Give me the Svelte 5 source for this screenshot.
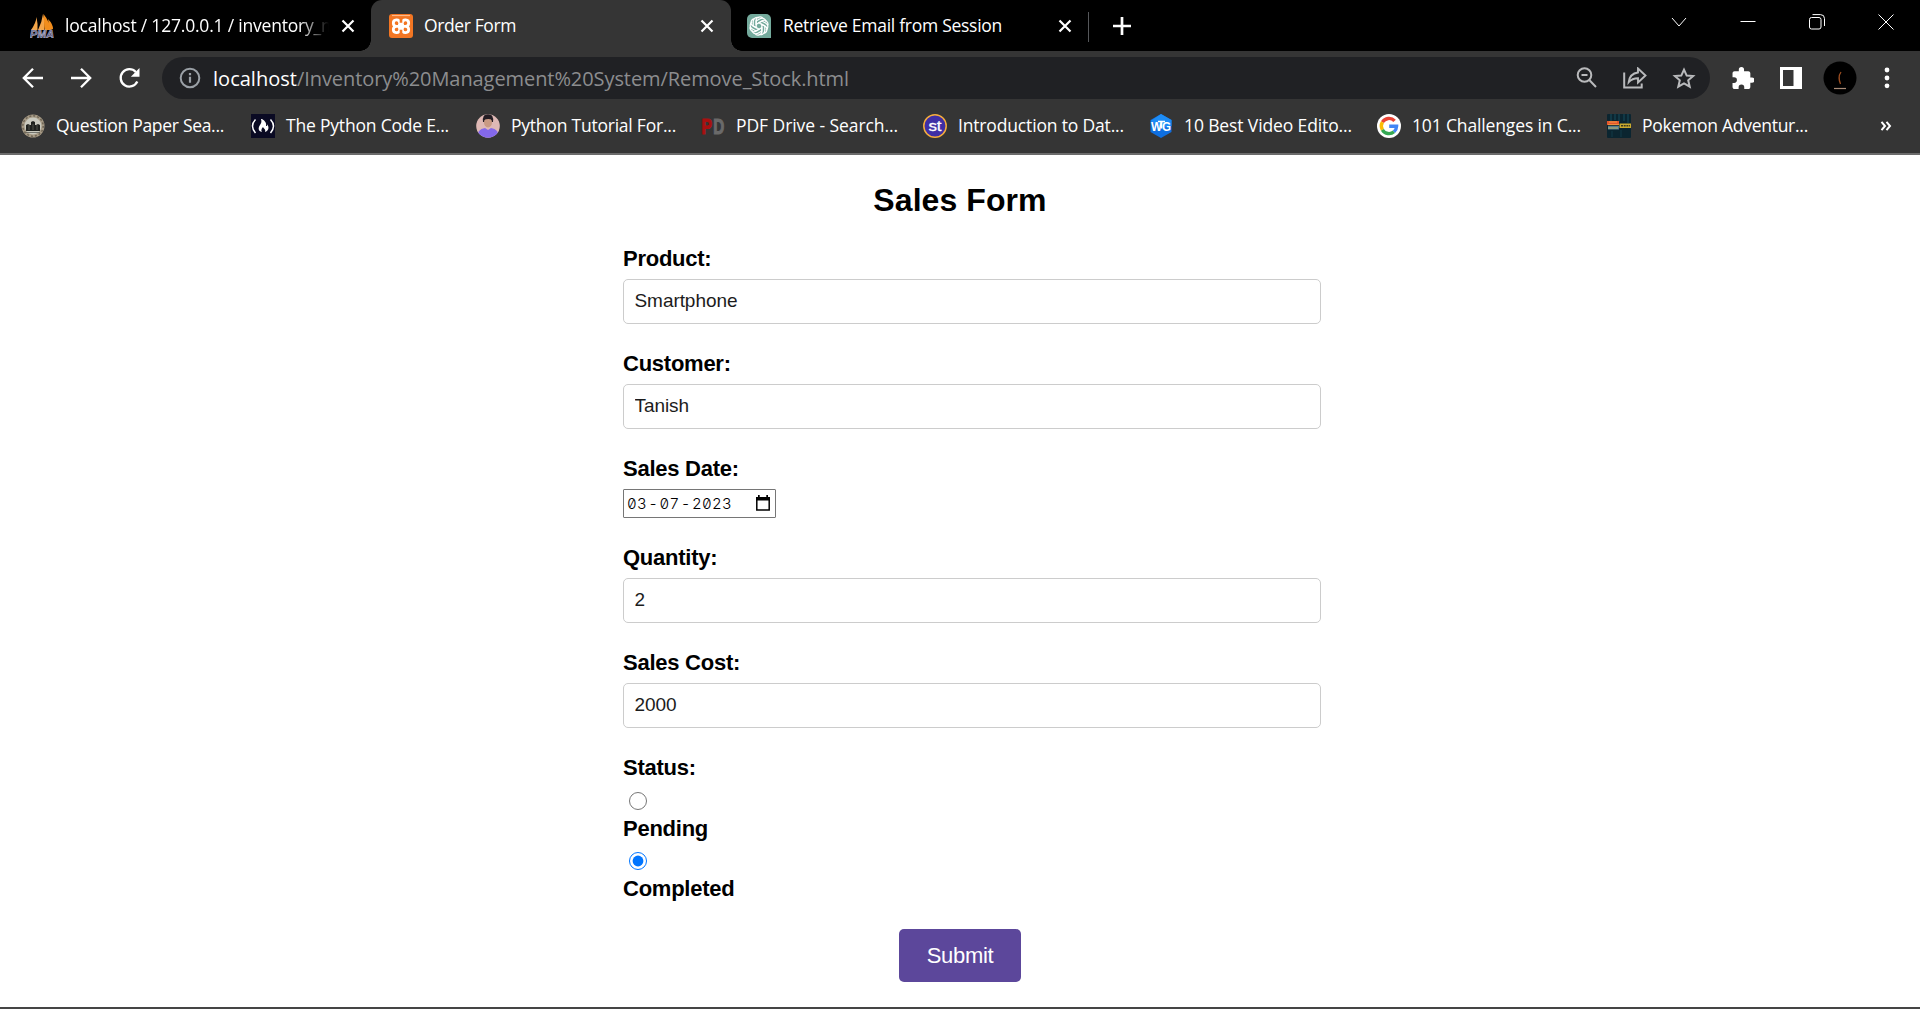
<script>
  const bookmarks = [
    { icon: 'seal', label: 'Question Paper Sea...', width: 168, slot: 230 },
    { icon: 'fcc', label: 'The Python Code E...', width: 163, slot: 225 },
    { icon: 'person', label: 'Python Tutorial For...', width: 165, slot: 225 },
    { icon: 'pd', label: 'PDF Drive - Search...', width: 162, slot: 222 },
    { icon: 'st', label: 'Introduction to Dat...', width: 166, slot: 226 },
    { icon: 'wg', label: '10 Best Video Edito...', width: 168, slot: 228 },
    { icon: 'google', label: '101 Challenges in C...', width: 169, slot: 230 },
    { icon: 'poke', label: 'Pokemon Adventur...', width: 166, slot: 230 },
  ];

  let product = $state('Smartphone');
  let customer = $state('Tanish');
  let quantity = $state('2');
  let cost = $state('2000');
  let status = $state('completed');

  // Spreads the letters so that a label fills exactly the given width.
  function fit(node, width) {
    const natural = node.getBoundingClientRect().width;
    node.style.letterSpacing = `${(width - natural) / node.textContent.length}px`;
  }
</script>

{#snippet cross()}
  <svg class="cross" width="14" height="14" viewBox="0 0 14 14"><path d="M1.500 1.500l11 11M12.500 1.500l-11 11" /></svg>
{/snippet}

{#snippet favicon(name)}
  <svg class="fav" width="24" height="24" viewBox="0 0 24 24">
    {#if name === 'pma'}
      <path d="M1 16Q6 9 6.500 3Q8 10 7.500 16ZM8 16Q12 8 13 0Q15.500 9 14 16Z" fill="#f5a548" />
      <path d="M13.500 0Q20 8 20 16H14.500ZM18 5q5 5 5 10l-3 1z" fill="#f18d1c" />
      <text x="0" y="23.500" font-size="10" font-weight="700" font-style="italic" textLength="24" lengthAdjust="spacingAndGlyphs" fill="#55557f" stroke="#c5c5dc" stroke-width=".5">PMA</text>
    {:else if name === 'xampp'}
      <rect width="24" height="24" rx="3" fill="#f37623" />
      <path d="M3 1.600h18" stroke="#ffc094" stroke-width="1" />
      <g fill="none" stroke="#fff" stroke-width="2.800">
        <path d="M9.500 12.300H7.500a3.200 3.200 0 1 1 3.200-3.600v7.200a3.200 3.200 0 1 1-3.200-3.600" />
        <path d="M14.500 12.300h2a3.200 3.200 0 1 0-3.200-3.600v7.200a3.200 3.200 0 1 0 3.200-3.600" />
      </g>
      <path d="M9 12.300h6" stroke="#fff" stroke-width="4.500" />
      <path d="M12 4.500v4.300M12 15.700V20" stroke="#f37623" stroke-width="2.600" />
    {:else if name === 'gpt'}
      <path d="M5 0h14a5 5 0 0 1 5 5v19H5a5 5 0 0 1-5-5V5a5 5 0 0 1 5-5z" fill="#74aa9c" />
      <g fill="none" stroke="#fff" stroke-width="1.200">
        {#each [0, 60, 120, 180, 240, 300] as angle}
          <path transform="rotate({angle} 12 12)" d="M12 8.800L9 10.500V6.700a4 4 0 0 1 7.300-2.100M9.100 7l4-2.300a4 4 0 0 1 6 3.600M12 8.800l3.300-1.900" />
        {/each}
      </g>
    {:else if name === 'seal'}
      <circle cx="12" cy="12" r="11.500" fill="#a69a85" />
      <circle cx="12" cy="12" r="10.200" fill="none" stroke="#6f6656" stroke-width="1.500" stroke-dasharray="2 2" />
      <circle cx="12" cy="12" r="8.500" fill="#c9c9be" />
      <path d="M5 17v-6l2-1 2 1h1V8l2-1 2 1v3h1l2-1 2 1v6z" fill="#20221f" />
      <path d="M8 11v5M12 10v6M16 11v5M5 18.500h14" stroke="#5c5d57" stroke-width=".8" />
    {:else if name === 'fcc'}
      <rect width="24" height="24" fill="#0a0a23" />
      <path d="M4.500 5.500Q-1.500 12 4.500 19M19.500 5.500q6 6.500 0 13.500" fill="none" stroke="#fff" stroke-width="1.500" />
      <path d="M11 5q5 3 4 7c2 0 1-2 1-2 3 4 1 7-2 8 1-3-1-3-2-5-2 2-2 4-1 5-4-1-4-4-2-7 1-2 2-3 1-6z" fill="#fff" />
    {:else if name === 'person'}
      <clipPath id="round"><circle cx="12" cy="12" r="11.800" /></clipPath>
      <g clip-path="url(#round)">
        <rect width="24" height="24" fill="#dfb9b5" />
        <path d="M7 8Q6 0 12 0q6 0 5 8z" fill="#241d24" />
        <ellipse cx="12" cy="8.500" rx="4" ry="5" fill="#c99a83" />
        <path d="M1 24q0-9 8-10l3 2 3-2q8 1 8 10z" fill="#8468ea" />
        <path d="M7.500 6Q8 1 12 2q4-1 4.500 4-4-2-9 0z" fill="#241d24" />
      </g>
    {:else if name === 'pd'}
      <text x=".5" y="20" font-size="22" font-weight="700" textLength="10.500" lengthAdjust="spacingAndGlyphs" fill="#a81010" stroke="#a81010" stroke-width="1.200">P</text>
      <text x="12.300" y="20" font-size="22" font-weight="700" textLength="11" lengthAdjust="spacingAndGlyphs" fill="#6a6a6a" stroke="#6a6a6a" stroke-width="1.200">D</text>
    {:else if name === 'st'}
      <circle cx="12" cy="12" r="11.200" fill="#3f2fa5" stroke="#f5ad3d" stroke-width="1.500" />
      <text x="5.400" y="16.500" font-size="15" textLength="13.200" lengthAdjust="spacingAndGlyphs" fill="#fff" stroke="#fff" stroke-width=".3">st</text>
    {:else if name === 'wg'}
      <path d="M12 0l10.500 6v12L12 24 1.500 18V6z" fill="#0f6fe0" />
      <path d="M12 0l10.500 6v6L12 14 1.500 7z" fill="#1d8cf5" />
      <text x="2" y="16.500" font-size="12" font-weight="700" textLength="20" lengthAdjust="spacingAndGlyphs" fill="#fff">WG</text>
      <path d="M9 7.500h7M12.500 7.500v7" stroke="#fff" stroke-width="1.600" />
    {:else if name === 'google'}
      <circle cx="12" cy="12" r="12" fill="#fff" />
      <g fill="none" stroke-width="3.400">
        <path d="M5.400 8.200A7.600 7.600 0 0 1 17.600 6.900" stroke="#ea4335" />
        <path d="M5.400 15.800A7.600 7.600 0 0 1 5.400 8.200" stroke="#fbbc05" />
        <path d="M17 17.700A7.600 7.600 0 0 1 5.400 15.800" stroke="#34a853" />
        <path d="M12.200 12.200h7.400a7.600 7.600 0 0 1-2.600 5.500" stroke="#4285f4" />
      </g>
    {:else}
      <rect width="24" height="24" rx="1" fill="#0b2530" />
      <path d="M4 0v7M8 0v6M12 0v8M17 0v7M21 0v9" stroke="#174654" stroke-width="1.200" />
      <path d="M5 17v6M14 16v7" stroke="#10333f" stroke-width="1.500" />
      <path d="M0 7h12v4H0z" fill="#e6552c" /><path d="M1 10.700h11M2 8h8" stroke="#f2b04b" stroke-width=".8" />
      <path d="M1 12h11v3.500H1z" fill="#517a92" /><path d="M1 14h10" stroke="#c3b664" />
      <path d="M12.500 9.500H24v4.500H12.500z" fill="#c9aa2f" /><path d="M14 11.800h9" stroke="#3c3a1d" stroke-width="1.600" stroke-dasharray="2 .7" />
    {/if}
  </svg>
{/snippet}

<div class="window">
  <div class="tabs">
    <div class="tab first">
      {@render favicon('pma')}
      <div class="title clipped"><span use:fit={272}>localhost / 127.0.0.1 / inventory_m</span></div>
      {@render cross()}
    </div>
    <div class="tab active">
      {@render favicon('xampp')}
      <div class="title"><span use:fit={92}>Order Form</span></div>
      {@render cross()}
    </div>
    <div class="tab third">
      {@render favicon('gpt')}
      <div class="title"><span use:fit={219}>Retrieve Email from Session</span></div>
      {@render cross()}
    </div>
    <svg class="plus" width="18" height="18" viewBox="0 0 18 18"><path d="M9 0v18M0 9h18" stroke="#fff" stroke-width="2.700" /></svg>
    <div class="controls">
      <svg width="16" height="16" viewBox="0 0 16 16"><path d="M1 4l7 8 7-8" /></svg>
      <svg width="16" height="16" viewBox="0 0 16 16"><path d="M.5 7.500h15" /></svg>
      <svg width="16" height="16" viewBox="0 0 16 16"><rect x=".5" y="3.500" width="11.500" height="11.500" rx="2" /><path d="M3.500.600H11.500a4 4 0 0 1 4 4V12" /></svg>
      <svg width="16" height="16" viewBox="0 0 16 16"><path d="M.5.500l15 15M15.500.500l-15 15" /></svg>
    </div>
  </div>

  <div class="toolbar">
    <svg width="22" height="22" viewBox="0 0 22 22"><path d="M21 11H2.500M11 1.800L1.800 11l9.200 9.200" /></svg>
    <svg width="22" height="22" viewBox="0 0 22 22"><path d="M1 11h18.500M11 1.800l9.200 9.200-9.200 9.200" /></svg>
    <svg width="22" height="22" viewBox="0 0 22 22"><path d="M19.300 14.500A8.700 8.700 0 1 1 17.800 5" /><path d="M21.500 1v8.700h-8.700z" fill="#fff" stroke="none" /></svg>
    <div class="address">
      <svg width="22" height="22" viewBox="0 0 22 22"><circle cx="11" cy="11" r="9.300" fill="none" stroke="#9aa0a6" stroke-width="2" /><path d="M11 9.800v6M11 6v2.200" stroke="#9aa0a6" stroke-width="2.200" /></svg>
      <div class="url"><b use:fit={84}>localhost</b><span use:fit={552}>/Inventory%20Management%20System/Remove_Stock.html</span></div>
      <div class="actions">
        <svg width="22" height="22" viewBox="0 0 22 22"><circle cx="8.500" cy="8" r="6.800" /><path d="M13.300 13l6.700 7M5.500 8h6" /></svg>
        <svg width="24" height="22" viewBox="0 0 24 22"><path d="M1.200 5.500v15h17.500v-4" /><path d="M15 1.500l7.500 7-7.500 7v-4.300c-4.500 0-7 1.300-9.300 4 .6-5 3.500-9 9.300-9.700z" stroke-width="1.900" /></svg>
        <svg width="24" height="22" viewBox="0 0 24 22"><path d="M12 2.600l2.700 6 6.400.5-4.900 4.200 1.500 6.400L12 16.300l-5.700 3.400 1.500-6.400L2.900 9.100l6.400-.5z" /></svg>
      </div>
    </div>
    <svg class="puzzle" width="22" height="22" viewBox="1.500 1 21 21"><path fill="#fff" stroke="none" d="M20.500 11H19V7c0-1.100-.9-2-2-2h-4V3.500a2.500 2.500 0 0 0-5 0V5H4c-1.100 0-2 .9-2 2v3.800h1.500a2.700 2.700 0 0 1 0 5.400H2V20c0 1.100.9 2 2 2h3.800v-1.500a2.700 2.700 0 0 1 5.400 0V22H17c1.100 0 2-.9 2-2v-4h1.500a2.500 2.500 0 0 0 0-5z" /></svg>
    <svg class="panel" width="22" height="22" viewBox="0 0 22 22"><path d="M0 0h22v22H0zM3 3v16h10.500V3z" fill="#fff" fill-rule="evenodd" stroke="none" /></svg>
    <svg class="avatar" width="34" height="34" viewBox="0 0 34 34"><circle cx="17" cy="17" r="16.500" fill="#000" stroke="none" /><path d="M18 11q-3.500 5-.5 12" stroke="#9b4d20" stroke-width="1.300" /><path d="M11 27.500h12" stroke="#a88b77" stroke-width="1.200" /></svg>
    <svg class="dots" width="6" height="22" viewBox="0 0 6 22"><g fill="#fff" stroke="none"><circle cx="3" cy="3" r="2.400" /><circle cx="3" cy="11" r="2.400" /><circle cx="3" cy="18.800" r="2.400" /></g></svg>
  </div>

  <div class="bookmarks">
    {#each bookmarks as mark}
      <div class="bookmark" style:width="{mark.slot}px">
        {@render favicon(mark.icon)}
        <span use:fit={mark.width}>{mark.label}</span>
      </div>
    {/each}
    <svg class="more" width="12" height="10" viewBox="0 0 12 10"><path d="M1.500 .8L5 5 1.500 9.200M6.500 .8L10 5 6.500 9.200" fill="none" stroke="#fff" stroke-width="2" /></svg>
  </div>

  <main>
    <h2>Sales Form</h2>
    <form onsubmit={(e) => e.preventDefault()}>
      <label for="product">Product:</label>
      <input class="box" id="product" bind:value={product} />
      <label for="customer">Customer:</label>
      <input class="box" id="customer" bind:value={customer} />
      <label for="date">Sales Date:</label>
      <div class="date" id="date">
        <span>03</span><span class="dash">-</span><span>07</span><span class="dash">-</span><span>2023</span>
        <svg width="16" height="16" viewBox="0 0 16 16"><path d="M1.800 3h12.400v12H1.800z" fill="none" stroke="#000" stroke-width="1.500" /><path d="M1 2h14v3.500H1zM3 0h1.700v3H3zM11.300 0H13v3h-1.700z" /></svg>
      </div>
      <label for="quantity">Quantity:</label>
      <input class="box" id="quantity" bind:value={quantity} />
      <label for="cost">Sales Cost:</label>
      <input class="box low" id="cost" bind:value={cost} />
      <label class="tight" for="pending">Status:</label>
      <div class="option"><input type="radio" id="pending" name="status" value="pending" bind:group={status} /></div>
      <label class="tight" for="pending">Pending</label>
      <div class="option short"><input type="radio" id="completed" name="status" value="completed" bind:group={status} /></div>
      <label class="tight" for="completed">Completed</label>
    </form>
    <button type="submit">Submit</button>
  </main>
</div>

<style>
  :global(body) { margin: 0; background: #fff; }
  * { box-sizing: border-box; }
  svg { display: block; flex: none; }

  .window {
    width: 1920px;
    height: 1009px;
    overflow: hidden;
    display: flex;
    flex-direction: column;
    background: #fff;
    border-bottom: 2px solid #454545;
    font-family: 'Open Sans', 'Noto Sans', sans-serif;
    font-size: 17.5px;
    color: #fff;
  }
  .fav text { font-family: 'Liberation Sans', sans-serif; }

  .tabs { flex: none; height: 51px; background: #000; display: flex; align-items: center; }
  .tab { height: 51px; display: flex; align-items: center; position: relative; }
  .first { width: 371px; padding: 0 16px 0 30px; }
  .active { width: 360px; padding: 0 17px 0 18px; background: #353535; border-radius: 11px 11px 0 0; }
  .active::before, .active::after {
    content: '';
    position: absolute;
    bottom: 0;
    width: 11px;
    height: 11px;
  }
  .active::before { left: -11px; background: radial-gradient(circle at 0 0, transparent 10.500px, #353535 11px); }
  .active::after { right: -11px; background: radial-gradient(circle at 100% 0, transparent 10.500px, #353535 11px); }
  .third { width: 358px; padding: 0 17px 0 16px; }
  .third::after { content: ''; position: absolute; right: 0; top: 12px; height: 30px; width: 1px; background: #55575a; }
  .title { flex: 1; margin: 0 12px 0 11px; padding-bottom: 2px; line-height: 26px; white-space: nowrap; }
  .third .title { margin-left: 12px; }
  .title span, .bookmark span { display: inline-block; }
  .clipped { width: 270px; margin-right: 6px; -webkit-mask-image: linear-gradient(90deg, #000 234px, transparent 264px); mask-image: linear-gradient(90deg, #000 234px, transparent 264px); }
  .cross path { stroke: #fff; stroke-width: 2.200; }
  .plus { margin-left: 24px; }
  .controls { display: flex; gap: 53px; margin: 0 26px 8px auto; }
  .controls svg { fill: none; stroke: #fff; stroke-width: 1; }

  .toolbar { flex: none; height: 54px; background: #353535; display: flex; align-items: center; padding: 0 30px 0 22px; }
  .toolbar svg { fill: none; stroke: #fff; stroke-width: 2.300; }
  .toolbar > svg:nth-child(-n + 2) { margin-right: 26px; }
  .address { width: 1548px; height: 42px; margin-left: 22px; padding: 0 14px 0 17px; display: flex; align-items: center; border-radius: 21px; background: #202124; }
  .url { margin-left: 12px; padding-top: 2px; font-size: 20px; line-height: 28px; white-space: nowrap; color: #8c8d8f; }
  .url b { font-weight: 400; color: #fff; display: inline-block; }
  .url span { display: inline-block; }
  .actions { display: flex; gap: 25px; margin-left: auto; }
  .toolbar .actions svg { stroke: #b9babc; stroke-width: 2; }
  .toolbar .puzzle { margin-left: 22px; }
  .toolbar .panel { margin-left: 26px; }
  .toolbar .avatar { margin-left: 21px; }
  .toolbar .dots { margin-left: 27px; }

  .bookmarks { flex: none; height: 50px; background: #353535; border-bottom: 2px solid #6b6b6b; display: flex; align-items: center; padding: 0 28px 6px 21px; }
  .bookmark { flex: none; display: flex; align-items: center; gap: 11px; white-space: nowrap; line-height: 26px; }
  .bookmark span { padding-bottom: 2px; }
  .more { margin-left: auto; }

  main { flex: 1; display: flex; flex-direction: column; align-items: center; padding-top: 27px; font-family: 'Liberation Sans', Arial, sans-serif; color: #000; }
  h2 { margin: 0 0 28px; font-size: 32px; line-height: 36px; font-weight: 700; letter-spacing: .08px; }
  form { width: 698px; margin-left: 24px; display: flex; flex-direction: column; align-items: flex-start; }
  label { font-size: 22px; line-height: 25px; font-weight: 700; letter-spacing: -.25px; margin-bottom: 8px; }
  label.tight { margin-bottom: 0; }
  .box { width: 698px; height: 45px; margin: 0 0 27px; padding: 0 10.500px 2px; border: 1px solid #ccc; border-radius: 5px; outline: none; background: #fff; font: 19px 'Liberation Sans', Arial, sans-serif; letter-spacing: -.06px; color: #1c1c1c; }
  .box.low { padding-bottom: 1px; }
  .date { width: 153px; height: 29px; margin-bottom: 27px; padding: 0 4px 0 3px; border: 1px solid #767676; border-radius: 1px; display: flex; align-items: center; font-family: Inter, sans-serif; font-size: 15px; font-weight: 300; font-feature-settings: 'zero', 'tnum'; letter-spacing: .3px; }
  .date .dash { width: 12.500px; text-align: center; }
  .date svg { margin: 0 0 2px auto; }
  .option { height: 36px; padding: 12px 0 0 6px; }
  .option.short { height: 35px; padding-top: 11px; }
  .option input { display: block; width: 18px; height: 18px; margin: 0; accent-color: #0075ff; }
  button { width: 122px; height: 53px; margin: 28px 0 0; padding: 0; border: 0; border-radius: 5px; background: #5c479b; color: #fff; font: 22px 'Liberation Sans', Arial, sans-serif; letter-spacing: -.3px; }
</style>
